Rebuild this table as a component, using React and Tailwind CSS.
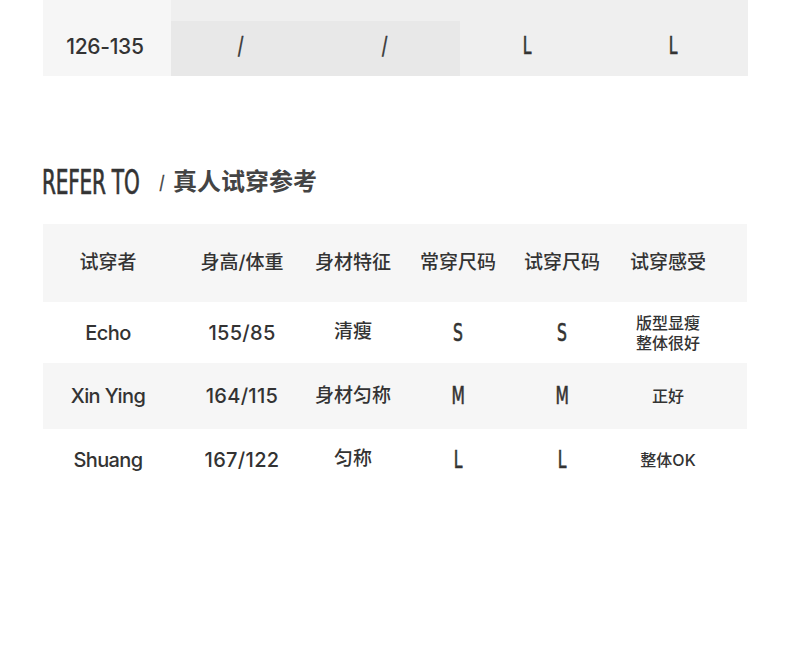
import React from "react";

const sans = { fontFamily: 'Inter, "Noto Sans CJK SC", sans-serif' };

const cond = "font-['DejaVu_Sans_Condensed','Liberation_Sans',sans-serif]";

function Cond({ children, className = "" }) {
  return <span className={`inline-block scale-x-[0.72] font-normal [-webkit-text-stroke:0.6px_#333] ${cond} ${className}`}>{children}</span>;
}

const rows = [
  { name: "Echo", hw: "155/85", body: "清瘦", usual: "S", tried: "S", feel: ["版型显瘦", "整体很好"], bg: "bg-white", h: "h-[61px]" },
  { name: "Xin Ying", hw: "164/115", body: "身材匀称", usual: "M", tried: "M", feel: ["正好"], bg: "bg-[#f6f6f6]", h: "h-[66px]" },
  { name: "Shuang", hw: "167/122", body: "匀称", usual: "L", tried: "L", feel: ["整体OK"], bg: "bg-white", h: "h-[61px]" },
];

const cols = "grid grid-cols-[130px_138px_84px_126px_82px_130px_14px]";

export default function App() {
  return (
    <div className="w-[790px] h-[645px] bg-white text-[#333]" style={sans}>
      {/* top size table */}
      <div className="pl-[43px] pr-[42px]">
        <div className="grid grid-cols-[128px_1fr_1fr_1fr_1fr]">
          <div className="h-[21px] bg-[#f6f6f6]" />
          <div className="h-[21px] bg-[#efefef]" />
          <div className="h-[21px] bg-[#efefef]" />
          <div className="h-[21px] bg-[#efefef]" />
          <div className="h-[21px] bg-[#efefef]" />
          <div className="h-[55px] bg-[#f6f6f6] flex items-center justify-center text-[21px] font-medium tracking-[-0.3px] pb-[4px] pr-[4px]">126-135</div>
          <div className="h-[55px] bg-[#e8e8e8] flex items-center justify-center text-[24px] pb-[6px] pr-[4px]"><Cond>/</Cond></div>
          <div className="h-[55px] bg-[#e8e8e8] flex items-center justify-center text-[24px] pb-[6px] pr-[6px]"><Cond>/</Cond></div>
          <div className="h-[55px] bg-[#efefef] flex items-center justify-center text-[24px] pb-[6px] pr-[10px]"><Cond>L</Cond></div>
          <div className="h-[55px] bg-[#efefef] flex items-center justify-center text-[24px] pb-[6px] pr-[6px]"><Cond>L</Cond></div>
        </div>
      </div>

      {/* heading */}
      <div className="pl-[42px] mt-[86px] h-[40px] flex items-center">
        <span className="inline-block w-[96px] whitespace-nowrap">
          <span className={`inline-block origin-left scale-x-[0.655] text-[34px] font-normal tracking-[-0.3px] text-[#333] [-webkit-text-stroke:0.7px_#333] ${cond}`}>REFER TO</span>
        </span>
        <span className="ml-[21px] text-[20px] text-[#444]"><Cond>/</Cond></span>
        <span className="ml-[8px] text-[24px] font-bold text-[#444] tracking-[0px]">真人试穿参考</span>
      </div>

      {/* try-on table */}
      <div className="pl-[43px] pr-[43px] mt-[22px]">
        <div className={`${cols} h-[78px] bg-[#f6f6f6] items-center text-[19px] font-medium text-[#333]`}>
          <div className="text-center">试穿者</div>
          <div className="text-center">身高/体重</div>
          <div className="text-center">身材特征</div>
          <div className="text-center">常穿尺码</div>
          <div className="text-center">试穿尺码</div>
          <div className="text-center">试穿感受</div>
          <div />
        </div>
        {rows.map((r) => (
          <div key={r.name} className={`${cols} ${r.h} ${r.bg} items-center text-[#333]`}>
            <div className="text-center text-[20px] font-medium tracking-[-0.6px]">{r.name}</div>
            <div className="text-center text-[20px] font-medium tracking-[0.3px]">{r.hw}</div>
            <div className="text-center text-[19px] font-medium">{r.body}</div>
            <div className="text-center text-[24px]"><Cond>{r.usual}</Cond></div>
            <div className="text-center text-[24px]"><Cond>{r.tried}</Cond></div>
            <div className="text-center text-[16px] font-medium leading-[20px]">
              {r.feel.map((f) => (
                <div key={f}>{f}</div>
              ))}
            </div>
            <div />
          </div>
        ))}
      </div>
    </div>
  );
}
